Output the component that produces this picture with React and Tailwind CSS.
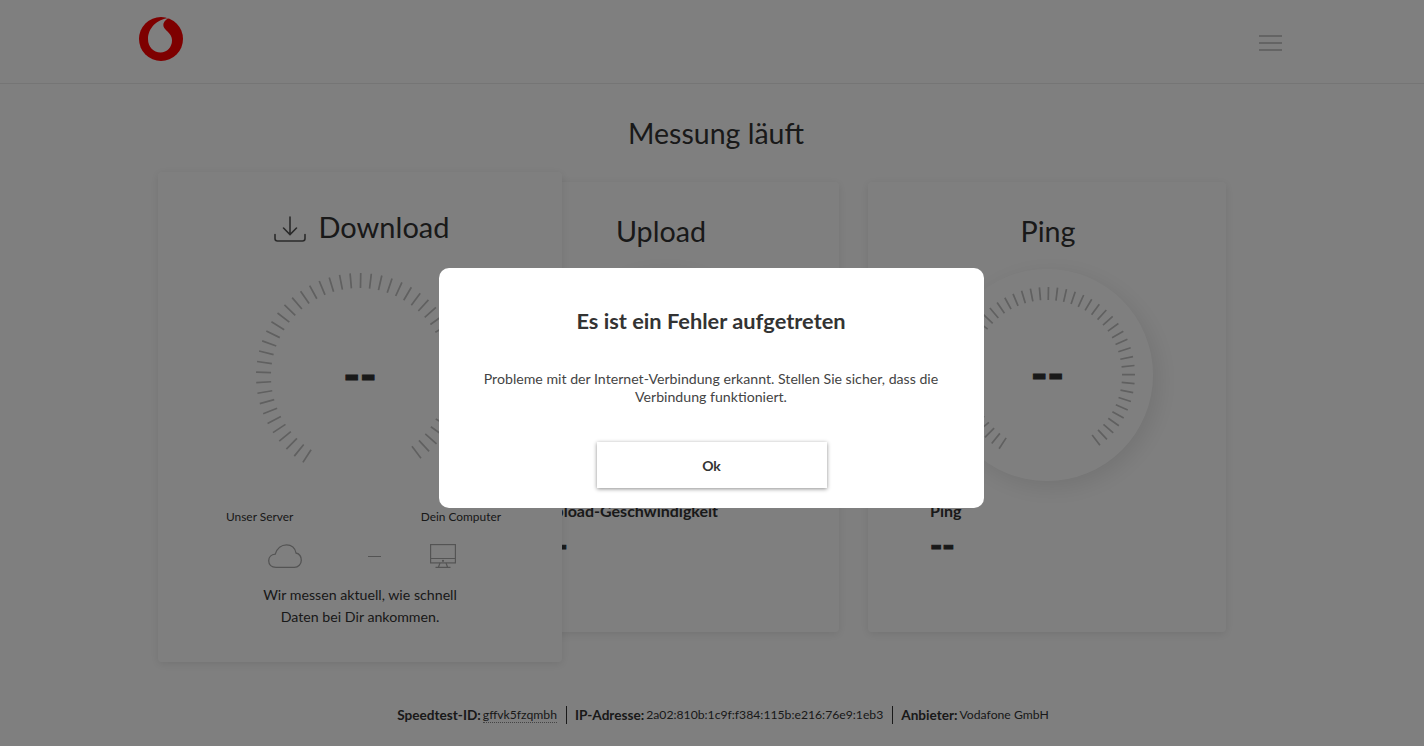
import React from 'react';

const TICKS = Array.from({ length: 50 }, (_, i) => -147 + (i * 290) / 49);

function Gauge({ outer, inner, stroke, className }) {
  return (
    <svg width="212" height="212" viewBox="-106 -106 212 212" className={`[grid-area:1/1] ${className}`}>
      {TICKS.map(angle => {
        const rad = (angle * Math.PI) / 180;
        return (
          <line
            key={angle}
            x1={Math.sin(rad) * inner}
            y1={-Math.cos(rad) * inner}
            x2={Math.sin(rad) * outer}
            y2={-Math.cos(rad) * outer}
            stroke="#c0c0c0"
            strokeWidth={stroke}
          />
        );
      })}
    </svg>
  );
}

function Dashes({ className }) {
  return <span className={`font-black text-[#333] [-webkit-text-stroke:1px_#333] ${className}`}>--</span>;
}

function Logo() {
  return (
    <svg width="44" height="44" viewBox="0 0 44 44">
      <circle cx="22" cy="22" r="22" fill="#fd0000" />
      <path
        d="M30 .9C18 2 9 11 9 22c0 8 5.500 13.500 12.500 13.500C28 35.500 33 30 33 23.500c0-5-3.500-8-6.500-11-2-2-2.500-4-2-6 1-3 3.500-4.700 5.500-5.600Z"
        fill="#fff"
      />
    </svg>
  );
}

function DownloadIcon() {
  return (
    <svg width="32" height="28" viewBox="0 0 32 28" fill="none" stroke="#555" strokeWidth="1.6" strokeLinecap="round" className="mt-[4px]">
      <path d="M16 2v17M9.500 13l6.500 6.500 6.500-6.500" />
      <path d="M1 19.500v4c0 1.500 1 2.500 2.500 2.500h25c1.500 0 2.500-1 2.500-2.500v-4" />
    </svg>
  );
}

function CloudIcon() {
  return (
    <svg width="34" height="24" viewBox="0 0 34 24" fill="none" stroke="#a8a8a8" strokeWidth="1.3">
      <path d="M8 23.300C3.500 23.300.7 20.500.7 16.800c0-3.600 2.700-6.300 6.500-6.600C9 4.500 13.500.8 18.500.8c5 0 8.700 3.300 9.500 8.200 3.300.8 5.300 3.700 5.300 7.200 0 4-3 7.100-7 7.100Z" />
    </svg>
  );
}

function MonitorIcon() {
  return (
    <svg width="26" height="24" viewBox="0 0 26 24" fill="none" stroke="#a8a8a8" strokeWidth="1.2">
      <rect x=".6" y=".6" width="24.800" height="18.300" />
      <path d="M.6 14.500h24.800M10 19l-1.500 4M16 19l1.500 4M5.500 23.400h15" />
      <circle cx="13" cy="16.800" r=".5" fill="#a8a8a8" />
    </svg>
  );
}

function DownloadCard() {
  return (
    <section className="relative z-10 flex h-[490px] w-[404px] shrink-0 flex-col rounded bg-white pt-[35px] shadow-[0_2px_10px_rgba(0,0,0,0.1)]">
      <h2 className="flex h-10 items-center justify-center gap-[13px] pl-[3px] text-[29px] text-[#333]">
        <DownloadIcon />
        Download
      </h2>
      <div className="mt-[22px] grid h-[212px] place-items-center">
        <Gauge outer={103} inner={88} stroke={1.7} className="mr-[3px] mt-[1px]" />
        <Dashes className="mb-[4px] [grid-area:1/1] text-[44px] leading-none" />
      </div>
      <div className="mt-[28px] flex justify-between pl-[68px] pr-[61px] text-[11.900px] leading-4 text-[#333]">
        <span>Unser Server</span>
        <span>Dein Computer</span>
      </div>
      <div className="mt-[19px] flex items-center pl-[110px]">
        <CloudIcon />
        <span className="ml-[66px] h-px w-[13px] bg-[#a8a8a8]" />
        <span className="ml-[49px]">
          <MonitorIcon />
        </span>
      </div>
      <p className="mt-[15.500px] text-center text-[14.200px] leading-[22px] text-[#333]">
        Wir messen aktuell, wie schnell
        <br />
        Daten bei Dir ankommen.
      </p>
    </section>
  );
}

function ResultCard({ title, label, className }) {
  return (
    <section className={`mt-[10px] flex h-[450px] w-[358px] shrink-0 flex-col rounded bg-white pt-[29px] shadow-[0_2px_10px_rgba(0,0,0,0.1)] ${className}`}>
      <h2 className="h-10 pl-[2px] text-center text-[28.700px] leading-10 text-[#333]">{title}</h2>
      <div className="mt-[18px] grid h-[212px] w-[212px] place-items-center self-center rounded-full bg-white shadow-[5px_6px_24px_rgba(0,0,0,0.1)]">
        <Gauge outer={88} inner={75} stroke={1.7} />
        <Dashes className="mb-[4px] ml-[1px] [grid-area:1/1] text-[44px] leading-none" />
      </div>
      <h3 className="mt-[20px] pl-[62px] text-[16px] font-bold leading-5 text-[#333]">{label}</h3>
      <Dashes className="mt-[8px] pl-[62px] text-[33px] leading-[30px]" />
    </section>
  );
}

function ErrorModal() {
  return (
    <div className="fixed inset-0 z-50 flex items-center justify-center bg-black/50 pr-[2px] pt-[30px]">
      <div className="flex h-[240px] w-[545px] flex-col items-center rounded-[10px] bg-white pt-[38px]">
        <h2 className="text-[21.800px] font-bold leading-[30px] text-[#333]">Es ist ein Fehler aufgetreten</h2>
        <p className="mt-[34px] w-[480px] text-center text-[14.150px] leading-[18px] text-[#444]">
          Probleme mit der Internet-Verbindung erkannt. Stellen Sie sicher, dass die Verbindung funktioniert.
        </p>
        <button className="ml-[1px] mt-[36px] h-[46px] w-[230px] bg-white text-[14px] font-bold text-[#333] shadow-[0_1px_4px_rgba(0,0,0,0.45)]">
          Ok
        </button>
      </div>
    </div>
  );
}

export default function App() {
  return (
    <div className="h-[746px] overflow-hidden bg-white font-['Lato',sans-serif]">
      <header className="flex h-[84px] items-start justify-between border-b border-[#ebebeb] pl-[139px] pr-[142px]">
        <div className="mt-[17px]">
          <Logo />
        </div>
        <div className="mt-[35px] flex w-[23px] flex-col gap-[5px]">
          <span className="h-[2px] bg-[#c8c8c8]" />
          <span className="h-[2px] bg-[#c8c8c8]" />
          <span className="h-[2px] bg-[#c8c8c8]" />
        </div>
      </header>

      <h1 className="mt-[29px] pl-[8px] text-center text-[28.500px] leading-10 text-[#333]">Messung läuft</h1>

      <main className="mt-[19px] flex pl-[158px]">
        <DownloadCard />
        <ResultCard title="Upload" label="Upload-Geschwindigkeit" className="ml-[-81px]" />
        <ResultCard title="Ping" label="Ping" className="ml-[29px]" />
      </main>

      <footer className="mt-[44px] flex items-center justify-center pl-[22px] text-[12.200px] leading-[18px] text-[#333]">
        <b className="text-[13.600px]">Speedtest-ID:</b>
        <span className="ml-[2px] border-b border-dotted border-[#888] leading-[14px]">gffvk5fzqmbh</span>
        <span className="ml-[9px] mr-2 h-[18px] w-px bg-[#333]" />
        <b className="text-[13.600px]">IP-Adresse:</b>
        <span className="ml-[2px]">2a02:810b:1c9f:f384:115b:e216:76e9:1eb3</span>
        <span className="ml-[9px] mr-2 h-[18px] w-px bg-[#333]" />
        <b className="text-[13.600px]">Anbieter:</b>
        <span className="ml-[2px]">Vodafone GmbH</span>
      </footer>

      <ErrorModal />
    </div>
  );
}
